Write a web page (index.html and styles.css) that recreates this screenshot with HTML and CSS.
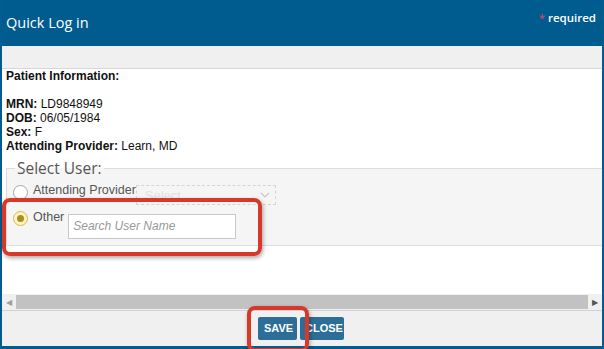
FILE: index.html
```html
<!DOCTYPE html>
<html>
<head>
<meta charset="utf-8">
<link rel="stylesheet" href="styles.css">
</head>
<body>
<div class="dialog">
  <div class="header">
    <div class="title">Quick Log in</div>
    <div class="req"><span class="star">*</span> required</div>
  </div>
  <div class="band"></div>
  <div class="body">
    <div class="info">
      <div><b>Patient Information:</b></div>
      <div>&nbsp;</div>
      <div><b>MRN:</b> LD9848949</div>
      <div><b>DOB:</b> 06/05/1984</div>
      <div><b>Sex:</b> F</div>
      <div><b>Attending Provider:</b> Learn, MD</div>
    </div>
    <fieldset class="users">
      <legend>Select User:</legend>
      <div class="row row1">
        <span class="radio"></span>
        <span class="lbl">Attending Provider</span>
        <span class="select">Select<svg class="chev" width="10" height="6" viewBox="0 0 10 6"><path d="M1 1l4 4 4-4" fill="none" stroke="#c8c8c8" stroke-width="1.2"/></svg></span>
      </div>
      <div class="row row2">
        <span class="radio on"><span class="dot"></span></span>
        <span class="lbl">Other</span>
        <span class="input">Search User Name</span>
      </div>
    </fieldset>
    <div class="spacer"></div>
  </div>
  <div class="scrollbar">
    <span class="arr">&#9664;</span>
    <span class="thumb"></span>
    <span class="arr">&#9654;</span>
  </div>
  <div class="footer">
    <span class="btn save">SAVE</span>
    <span class="btn close">CLOSE</span>
  </div>
  <div class="hl hl1"></div>
  <div class="hl hl2"></div>
</div>
</body>
</html>
```
FILE: styles.css
```css
* { box-sizing: border-box; }
html, body { margin: 0; padding: 0; }
body { width: 604px; height: 349px; overflow: hidden; background: #fff; font-family: "Liberation Sans", Arial, sans-serif; }
.dialog { position: relative; width: 604px; height: 349px; display: flex; flex-direction: column; border-left: 2px solid #045b8e; border-right: 2px solid #045b8e; border-bottom: 3px solid #045b8e; }
.header { height: 46px; background: #005b8f; color: #fff; display: flex; justify-content: space-between; padding: 0 6px 0 4px; flex: none; }
.title { font-family: "Open Sans", "Noto Sans", sans-serif; font-size: 14.5px; line-height: 45px; }
.req { font-family: "Open Sans", sans-serif; font-size: 11.5px; padding-top: 10px; font-weight: 600; }
.star { color: #e0435a; font-weight: 400; }
.band { height: 23px; background: #f0f0f0; border-bottom: 1px solid #d8d8d8; flex: none; }
.body { flex: 1; display: flex; flex-direction: column; }
.info { padding: 0 4px; font-size: 12px; line-height: 14px; color: #111; }
.users { margin: 6px 0 0 4px; padding: 0 0 8px 6px; border: 1px solid #dcdcdc; border-right: none; background: #f5f5f5; height: 87px; }
.users legend { font-family: "Open Sans", sans-serif; font-size: 15.5px; color: #555; padding: 0 2px; margin-left: 2px; line-height: 18px; }
.row { display: flex; align-items: center; font-size: 12.5px; color: #555; }
.row1 { height: 22px; margin-top: 4px; }
.row2 { height: 28px; margin-top: 6px; align-items: flex-start; }
.radio { width: 15px; height: 15px; border-radius: 50%; border: 1px solid #a8a8a8; background: #fff; margin-right: 5px; display: flex; align-items: center; justify-content: center; }
.row2 .radio { margin-top: 2px; }
.radio.on { border-color: #e0b840; background: #fdf3c8; }
.dot { width: 7px; height: 7px; border-radius: 50%; background: #b08d1a; }
.row1 .lbl { align-self: flex-start; padding-top: 2px; }
.row2 .lbl { padding-top: 1px; }
.select { margin-left: 0; width: 140px; height: 20px; border: 1px dashed #d4d4d4; margin-top: 6px; display: flex; justify-content: space-between; align-items: center; padding: 0 5px 0 8px; color: #e2e2e2; font-size: 13px; }
.input { margin-left: 4px; margin-top: 5px; width: 168px; height: 25px; border: 1px solid #c8c8c8; background: #fff; font-style: italic; color: #999; font-size: 12px; line-height: 23px; padding-left: 4px; }
.spacer { flex: 1; }
.scrollbar { height: 16px; background: #f0f0f0; display: flex; align-items: center; flex: none; }
.arr { width: 14px; font-size: 8px; color: #a0a0a0; text-align: center; }
.arr:last-child { color: #555; }
.thumb { flex: 1; height: 14px; background: #c2c2c2; }
.footer { height: 36px; background: #f0f0f0; border-top: 1px solid #cdd3d8; display: flex; justify-content: center; align-items: center; gap: 3px; padding-right: 2px; flex: none; }
.btn { height: 23px; background: #2c6e97; color: #fff; font-size: 11px; font-weight: bold; line-height: 23px; padding: 0 6px; border-radius: 2px; }
.save { width: 39px; padding: 0 0 0 6px; }
.close { width: 44px; padding: 0 0 0 5px; }
.hl { position: absolute; border: 4px solid #d8382a; border-radius: 8px; box-shadow: 1px 2px 4px rgba(0,0,0,0.35); }
.hl1 { left: 0px; top: 198px; width: 260px; height: 58px; }
.hl2 { left: 245px; top: 306px; width: 62px; height: 46px; }
```
